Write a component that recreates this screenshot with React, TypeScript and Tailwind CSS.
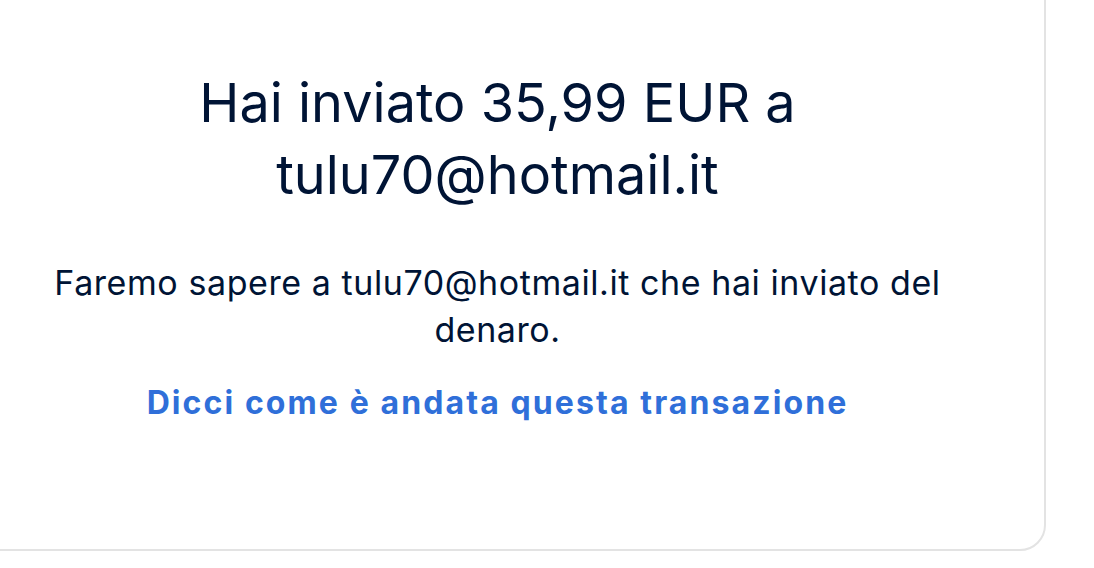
export default function App() {
  return (
    <div className="w-[1094px] h-[568px] bg-white overflow-hidden" style={{ fontFamily: 'Inter, "Noto Sans", sans-serif' }}>
      <div className="ml-[-51px] mt-[-100px] w-[1097px] border-2 border-[#e3e3e3] rounded-[26px] bg-white pt-[165px] pb-[126px] flex flex-col items-center text-center">
        <h1 className="text-[54px] leading-[72px] font-normal text-[#001435] max-w-[680px]">
          Hai inviato 35,99 EUR a tulu70@hotmail.it
        </h1>
        <p className="mt-[48px] text-[34px] leading-[47px] tracking-[0.57px] text-[#001435] max-w-[930px]">
          Faremo sapere a tulu70@hotmail.it che hai inviato del denaro.
        </p>
        <a href="#" className="mt-[30px] text-[32px] leading-[40px] font-bold tracking-[2.1px] text-[#2f6fd9]">
          Dicci come è andata questa transazione
        </a>
      </div>
    </div>
  );
}
